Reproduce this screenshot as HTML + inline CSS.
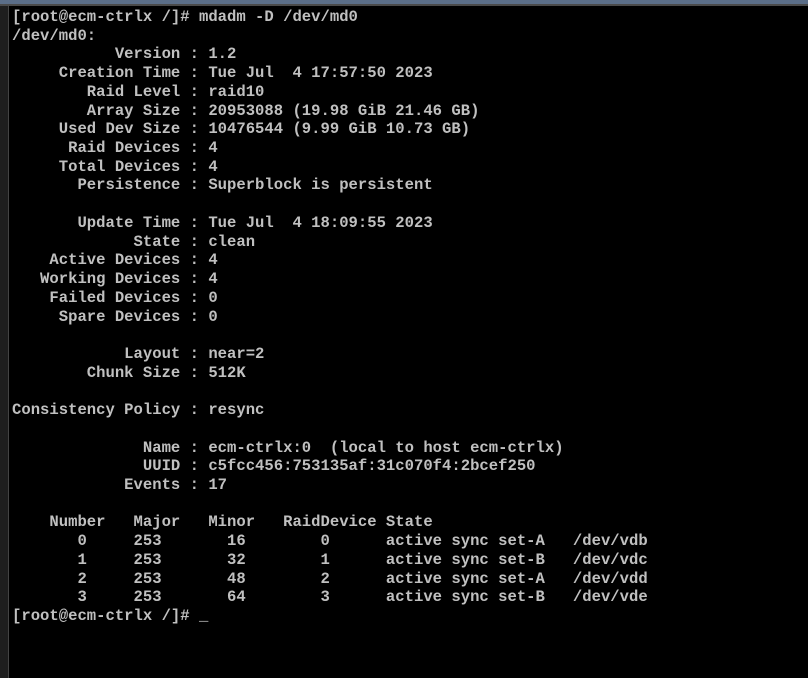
<!DOCTYPE html>
<html><head><style>
html,body{margin:0;padding:0;background:#000;width:808px;height:678px;overflow:hidden;}
.top{position:absolute;left:0;top:0;width:808px;height:4px;background:#5b6e88;}
.top2{position:absolute;left:0;top:4px;width:808px;height:2px;background:#4a4a4a;}
.left{position:absolute;left:0;top:6px;width:8px;height:672px;background:#1e1e1e;}
.left2{position:absolute;left:8px;top:6px;width:1px;height:672px;background:#444;}
pre{position:absolute;left:12px;top:8px;margin:0;font-family:"Liberation Mono",monospace;font-size:15.58px;line-height:18.72px;color:#c0c0c0;font-weight:bold;letter-spacing:0;}
</style></head><body>
<div class="top"></div><div class="top2"></div><div class="left"></div><div class="left2"></div>
<pre>[root@ecm-ctrlx /]# mdadm -D /dev/md0
/dev/md0:
           Version : 1.2
     Creation Time : Tue Jul  4 17:57:50 2023
        Raid Level : raid10
        Array Size : 20953088 (19.98 GiB 21.46 GB)
     Used Dev Size : 10476544 (9.99 GiB 10.73 GB)
      Raid Devices : 4
     Total Devices : 4
       Persistence : Superblock is persistent

       Update Time : Tue Jul  4 18:09:55 2023
             State : clean
    Active Devices : 4
   Working Devices : 4
    Failed Devices : 0
     Spare Devices : 0

            Layout : near=2
        Chunk Size : 512K

Consistency Policy : resync

              Name : ecm-ctrlx:0  (local to host ecm-ctrlx)
              UUID : c5fcc456:753135af:31c070f4:2bcef250
            Events : 17

    Number   Major   Minor   RaidDevice State
       0     253       16        0      active sync set-A   /dev/vdb
       1     253       32        1      active sync set-B   /dev/vdc
       2     253       48        2      active sync set-A   /dev/vdd
       3     253       64        3      active sync set-B   /dev/vde
[root@ecm-ctrlx /]# _</pre>
</body></html>
